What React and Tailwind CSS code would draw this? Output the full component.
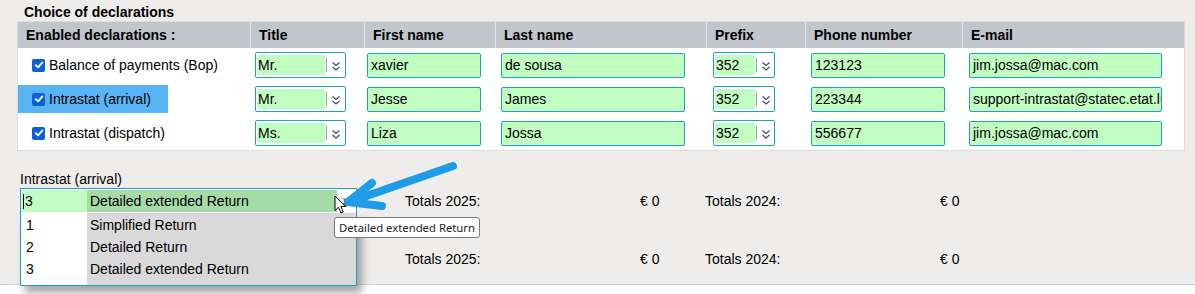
import React from 'react'

const rows = [
  { label: 'Balance of payments (Bop)', title: 'Mr.', first: 'xavier', last: 'de sousa', prefix: '352', phone: '123123', email: 'jim.jossa@mac.com' },
  { label: 'Intrastat (arrival)', title: 'Mr.', first: 'Jesse', last: 'James', prefix: '352', phone: '223344', email: 'support-intrastat@statec.etat.lu', selected: true },
  { label: 'Intrastat (dispatch)', title: 'Ms.', first: 'Liza', last: 'Jossa', prefix: '352', phone: '556677', email: 'jim.jossa@mac.com' },
]

const options = [
  ['1', 'Simplified Return'],
  ['2', 'Detailed Return'],
  ['3', 'Detailed extended Return'],
]

function Chevrons() {
  return (
    <svg width="10" height="11" viewBox="0 0 10 11" fill="none" stroke="#3b4a5a" strokeWidth="1.2">
      <polyline points="1.5,1.5 5,4.5 8.5,1.5" />
      <polyline points="1.5,6 5,9 8.5,6" />
    </svg>
  )
}

function Field({ value, width }) {
  return (
    <div
      className="h-[25px] border border-[#1d9fc9] rounded-[2px] bg-[#c1fdc1] px-[3px] flex items-center overflow-hidden whitespace-nowrap"
      style={{ width }}
    >
      {value}
    </div>
  )
}

function Select({ value, width, fill }) {
  return (
    <div
      className="h-[26px] border border-[#1d9fc9] rounded-[2px] bg-white flex items-stretch"
      style={{ width }}
    >
      <div className="bg-[#c1fdc1] my-[2px] ml-[1px] px-[1px] flex items-center" style={{ width: fill }}>
        {value}
      </div>
      <div className="w-px bg-[#8aa6b8] my-[5px] ml-[1px]" />
      <div className="flex-1 flex items-center justify-center pt-[2px]">
        <Chevrons />
      </div>
    </div>
  )
}

function Checkbox() {
  return (
    <span className="w-[13px] h-[13px] rounded-[2px] bg-[#0a62d6] flex items-center justify-center shrink-0">
      <svg width="10" height="10" viewBox="0 0 10 10" fill="none" stroke="white" strokeWidth="1.8" strokeLinecap="round" strokeLinejoin="round">
        <polyline points="1.8,5.2 4,7.4 8.4,2.4" />
      </svg>
    </span>
  )
}

export default function App() {
  const cols = 'grid grid-cols-[232px_114px_131px_211px_99px_157px_223px]'
  return (
    <div
      className="relative w-[1195px] h-[294px] bg-white overflow-hidden text-[14px] text-black"
      style={{ fontFamily: '"Liberation Sans", Arial, sans-serif' }}
    >
      <div className="h-[285px] bg-[#eeedeb] border-b border-[#d6d6d6] flex flex-col">
        <div className="pl-[24px] pt-[4px] h-[21px] font-bold leading-[16px]">Choice of declarations</div>

        {/* declarations table */}
        <div className="ml-[17px] w-[1168px] border border-[#dcdcdc] bg-white">
          <div className={`${cols} h-[26px] bg-[#c0c6cc] font-bold items-center`}>
            {['Enabled declarations :', 'Title', 'First name', 'Last name', 'Prefix', 'Phone number', 'E-mail'].map((h, i) => (
              <div key={h} className={`h-full flex items-center ${i === 0 ? 'pl-[8px]' : 'pl-[8px] border-l border-[#dde6ec]'}`}>
                {h}
              </div>
            ))}
          </div>
          {rows.map((r, i) => (
            <div key={i} className={`${cols} h-[34px] items-center`}>
              <div className="h-full flex items-center">
                <div className={`flex items-center gap-[4px] pl-[14px] h-[28px] ${r.selected ? 'bg-[#58b4f4] w-[150px]' : ''}`}>
                  <Checkbox />
                  <span className="whitespace-nowrap">{r.label}</span>
                </div>
              </div>
              <div className="pl-[5px]"><Select value={r.title} width={91} fill={68} /></div>
              <div className="pl-[3px]"><Field value={r.first} width={114} /></div>
              <div className="pl-[6px]"><Field value={r.last} width={184} /></div>
              <div className="pl-[7px]"><Select value={r.prefix} width={62} fill={40} /></div>
              <div className="pl-[6px]"><Field value={r.phone} width={134} /></div>
              <div className="pl-[7px]"><Field value={r.email} width={193} /></div>
            </div>
          ))}
        </div>

        {/* return types and totals */}
        <div className="pl-[20px] pt-[20px] flex flex-col">
          <div className="h-[16px] leading-[16px]">Intrastat (arrival)</div>
          <div className="flex items-center mt-[1px]">
            <div className="w-[337px] h-[26px] border border-[#17a3c6] bg-white flex items-stretch">
              <div className="w-[65px] bg-[#c3fcc3] flex items-center pl-[1px] my-[1px] ml-[1px]">
                <span className="w-px h-[15px] bg-black mr-[1px]" />3
              </div>
              <div className="w-[250px] bg-[#a6daa6] flex items-center pl-[3px] my-[1px]">Detailed extended Return</div>
              <div className="flex-1 flex items-center justify-center pt-[2px]"><Chevrons /></div>
            </div>
            <div className="ml-[48px] grid grid-cols-[235px_65px_235px_60px]">
              <span>Totals 2025:</span>
              <span>€ 0</span>
              <span>Totals 2024:</span>
              <span>€ 0</span>
            </div>
          </div>
          <div className="flex items-center mt-[32px] h-[26px]">
            <div className="w-[337px]" />
            <div className="ml-[48px] grid grid-cols-[235px_65px_235px_60px]">
              <span>Totals 2025:</span>
              <span>€ 0</span>
              <span>Totals 2024:</span>
              <span>€ 0</span>
            </div>
          </div>
        </div>
      </div>

      {/* open dropdown list */}
      <div className="absolute left-[20px] top-[213px] w-[337px] h-[73px] border border-t-0 border-[#17a3c6] bg-[#d9d9d9] flex shadow-[5px_7px_8px_rgba(0,0,0,0.35)]">
        <div className="w-[66px] bg-white flex flex-col pt-[1px]">
          {options.map(([k]) => (
            <div key={k} className="h-[22px] leading-[22px] pl-[5px]">{k}</div>
          ))}
        </div>
        <div className="flex flex-col pt-[1px] pl-[3px]">
          {options.map(([k, v]) => (
            <div key={k} className="h-[22px] leading-[22px]">{v}</div>
          ))}
        </div>
      </div>

      {/* tooltip */}
      <div
        className="absolute left-[334px] top-[217px] h-[21px] px-[4px] border border-[#7a7a7a] rounded-[3px] bg-white text-[11.3px] leading-[19px] text-[#222]"
        style={{ fontFamily: '"Noto Sans", "Open Sans", sans-serif' }}
      >
        Detailed extended Return
      </div>

      {/* annotation arrow */}
      <svg className="absolute left-0 top-0 pointer-events-none" width="1195" height="294">
        <g stroke="#1e9ce8" strokeWidth="8" strokeLinecap="round" strokeLinejoin="round" fill="none">
          <line x1="453" y1="166" x2="352" y2="201" />
          <polyline points="372,183 348,202 382,206" />
        </g>
      </svg>

      {/* mouse pointer */}
      <svg className="absolute left-[334px] top-[195px] pointer-events-none" width="14" height="20" viewBox="0 0 14 20">
        <path d="M1 1 L1 15.5 L4.5 12.3 L7 18 L9.3 17 L6.9 11.4 L11.6 11.4 Z" fill="white" stroke="black" strokeWidth="1" strokeLinejoin="round" />
      </svg>
    </div>
  )
}
